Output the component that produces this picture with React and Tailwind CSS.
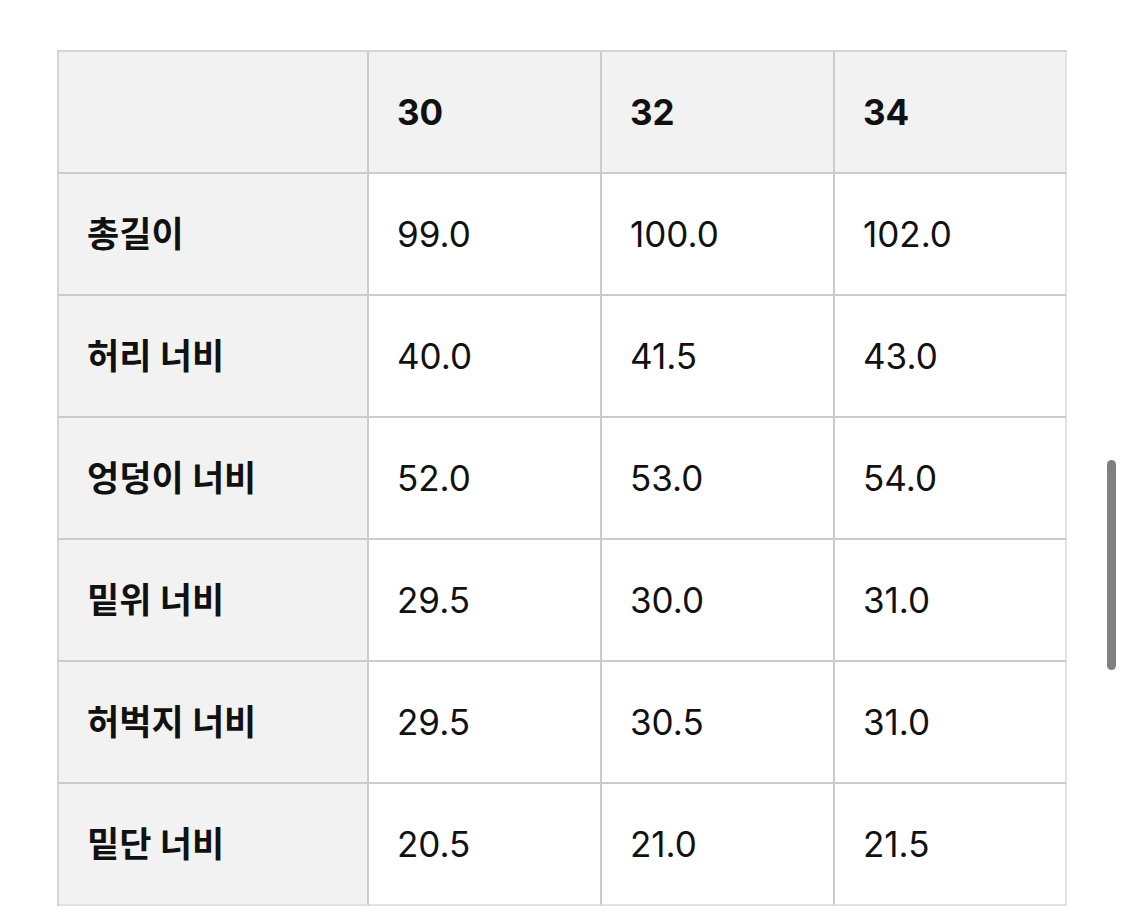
const sizes = ['30', '32', '34'];

const rows = [
  { label: '총길이', values: ['99.0', '100.0', '102.0'] },
  { label: '허리 너비', values: ['40.0', '41.5', '43.0'] },
  { label: '엉덩이 너비', values: ['52.0', '53.0', '54.0'] },
  { label: '밑위 너비', values: ['29.5', '30.0', '31.0'] },
  { label: '허벅지 너비', values: ['29.5', '30.5', '31.0'] },
  { label: '밑단 너비', values: ['20.5', '21.0', '21.5'] },
];

function Cell({ children, head, last, bottom, bold }) {
  return (
    <div
      className={`flex h-[122px] items-center pl-[28px] border-b-2 border-r-2 ${
        head ? 'bg-[#f2f2f2]' : 'bg-white'
      } ${last ? 'border-r-[#e2e2e2]' : 'border-r-[#cbcbcb]'} ${
        bottom ? 'border-b-[#e2e2e2]' : 'border-b-[#cbcbcb]'
      } ${bold ? 'font-bold' : 'font-normal'}`}
    >
      {children}
    </div>
  );
}

export default function App() {
  return (
    <div
      className="relative h-[915px] w-[1125px] overflow-hidden bg-white text-[35px] text-[#111]"
      style={{ fontFamily: 'Inter, "Noto Sans CJK KR", sans-serif' }}
    >
      <div className="ml-[57px] mt-[50px] grid w-[1010px] grid-cols-[310px_233px_233px_232px] border-l-2 border-t-2 border-[#d4d4d4]">
        <Cell head />
        {sizes.map((s, i) => (
          <Cell key={s} head bold last={i === sizes.length - 1}>
            {s}
          </Cell>
        ))}
        {rows.map((r, ri) => {
          const bottom = ri === rows.length - 1;
          return [
            <Cell key={r.label} head bold bottom={bottom}>
              {r.label}
            </Cell>,
            ...r.values.map((v, i) => (
              <Cell key={r.label + i} last={i === r.values.length - 1} bottom={bottom}>
                {v}
              </Cell>
            )),
          ];
        })}
      </div>
      <div className="absolute left-[1107px] top-[460px] h-[210px] w-[9px] rounded-full bg-[#808080]" />
    </div>
  );
}
